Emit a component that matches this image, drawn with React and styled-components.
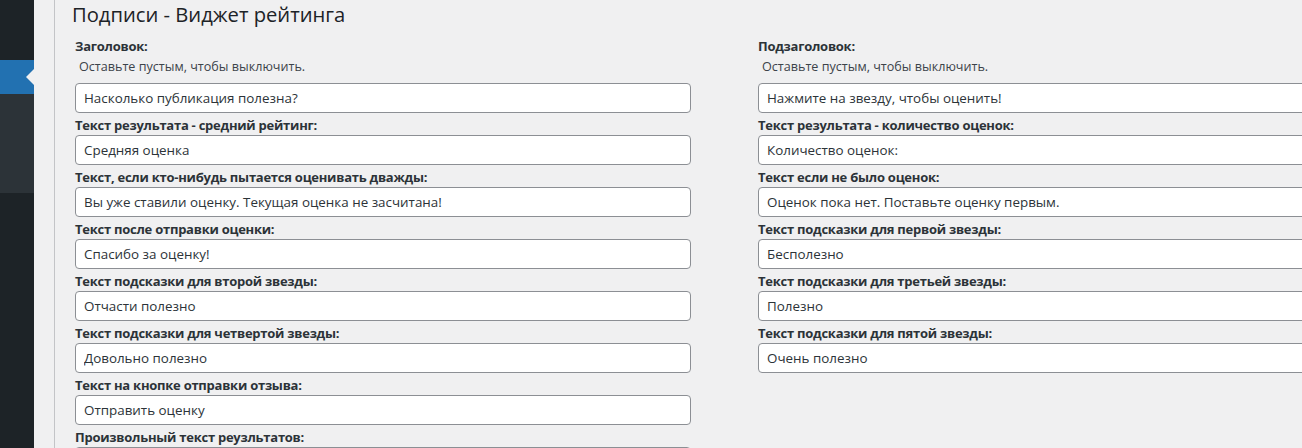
import React from "react";
import styled, { createGlobalStyle } from "styled-components";

const Global = createGlobalStyle`
  html, body {
    margin: 0;
    padding: 0;
    background: #f0f0f1;
    overflow: hidden;
  }
  body {
    font-family: "Open Sans", "Noto Sans", sans-serif;
    color: #2c3338;
  }
`;

const Page = styled.div`
  display: flex;
  height: 448px;
  width: 1302px;
  overflow: hidden;
`;

const Sidebar = styled.div`
  width: 34px;
  flex: none;
  display: flex;
  flex-direction: column;
  background: #1d2327;
`;

const SideBlock = styled.div`
  height: ${({ h }) => h}px;
  background: ${({ bg }) => bg};
  position: relative;
`;

const ActiveItem = styled(SideBlock)`
  &::after {
    content: "";
    position: absolute;
    right: 0;
    top: 50%;
    margin-top: -8px;
    border: 8px solid transparent;
    border-right-color: #f0f0f1;
  }
`;

const Main = styled.div`
  flex: 1;
  padding-left: 20px;
  min-width: 0;
`;

const Panel = styled.div`
  border-left: 1px solid #c3c4c7;
  height: 100%;
  padding-left: 17px;
  box-sizing: border-box;
`;

const Title = styled.h2`
  margin: 0 0 6px;
  font-size: 20.2px;
  line-height: 28px;
  font-weight: 400;
  color: #1d2327;
`;

const Grid = styled.div`
  display: grid;
  grid-template-columns: 683px 683px;
  margin-left: 3px;
`;

const Field = styled.div`
  padding-top: 3px;
`;

const Label = styled.label`
  display: block;
  font-size: 13px;
  font-weight: 700;
  letter-spacing: -0.25px;
  line-height: 19px;
  height: 19px;
  color: #2c3338;
  white-space: nowrap;
`;

const Help = styled.div`
  font-size: 12.6px;
  line-height: 20px;
  margin: 1px 0 6px 4px;
  color: #3c434a;
`;

const Input = styled.input`
  display: block;
  box-sizing: border-box;
  width: 616px;
  height: 30px;
  margin: 0;
  padding: 0 8px;
  font-family: inherit;
  font-size: 13.4px;
  color: #2c3338;
  background: #fff;
  border: 1px solid #8c8f94;
  border-radius: 4px;
  outline: none;
`;

const rows = [
  [
    { label: "Заголовок:", help: true, value: "Насколько публикация полезна?" },
    { label: "Подзаголовок:", help: true, value: "Нажмите на звезду, чтобы оценить!" },
  ],
  [
    { label: "Текст результата - средний рейтинг:", value: "Средняя оценка" },
    { label: "Текст результата - количество оценок:", value: "Количество оценок:" },
  ],
  [
    { label: "Текст, если кто-нибудь пытается оценивать дважды:", value: "Вы уже ставили оценку. Текущая оценка не засчитана!" },
    { label: "Текст если не было оценок:", value: "Оценок пока нет. Поставьте оценку первым." },
  ],
  [
    { label: "Текст после отправки оценки:", value: "Спасибо за оценку!" },
    { label: "Текст подсказки для первой звезды:", value: "Бесполезно" },
  ],
  [
    { label: "Текст подсказки для второй звезды:", value: "Отчасти полезно" },
    { label: "Текст подсказки для третьей звезды:", value: "Полезно" },
  ],
  [
    { label: "Текст подсказки для четвертой звезды:", value: "Довольно полезно" },
    { label: "Текст подсказки для пятой звезды:", value: "Очень полезно" },
  ],
  [{ label: "Текст на кнопке отправки отзыва:", value: "Отправить оценку" }, null],
  [{ label: "Произвольный текст реузльтатов:", value: "" }, null],
];

const FieldBox = ({ item }) => (
  <Field>
    <Label>{item.label}</Label>
    {item.help && <Help>Оставьте пустым, чтобы выключить.</Help>}
    <Input defaultValue={item.value} />
  </Field>
);

export default function App() {
  return (
    <Page>
      <Global />
      <Sidebar>
        <SideBlock h={60} bg="#1d2327" />
        <ActiveItem h={34} bg="#2271b1" />
        <SideBlock h={99} bg="#2c3338" />
      </Sidebar>
      <Main>
        <Panel>
          <Title>Подписи - Виджет рейтинга</Title>
          <Grid>
            {rows.map((row, i) =>
              row.map((item, j) =>
                item ? <FieldBox key={`${i}-${j}`} item={item} /> : <div key={`${i}-${j}`} />
              )
            )}
          </Grid>
        </Panel>
      </Main>
    </Page>
  );
}
